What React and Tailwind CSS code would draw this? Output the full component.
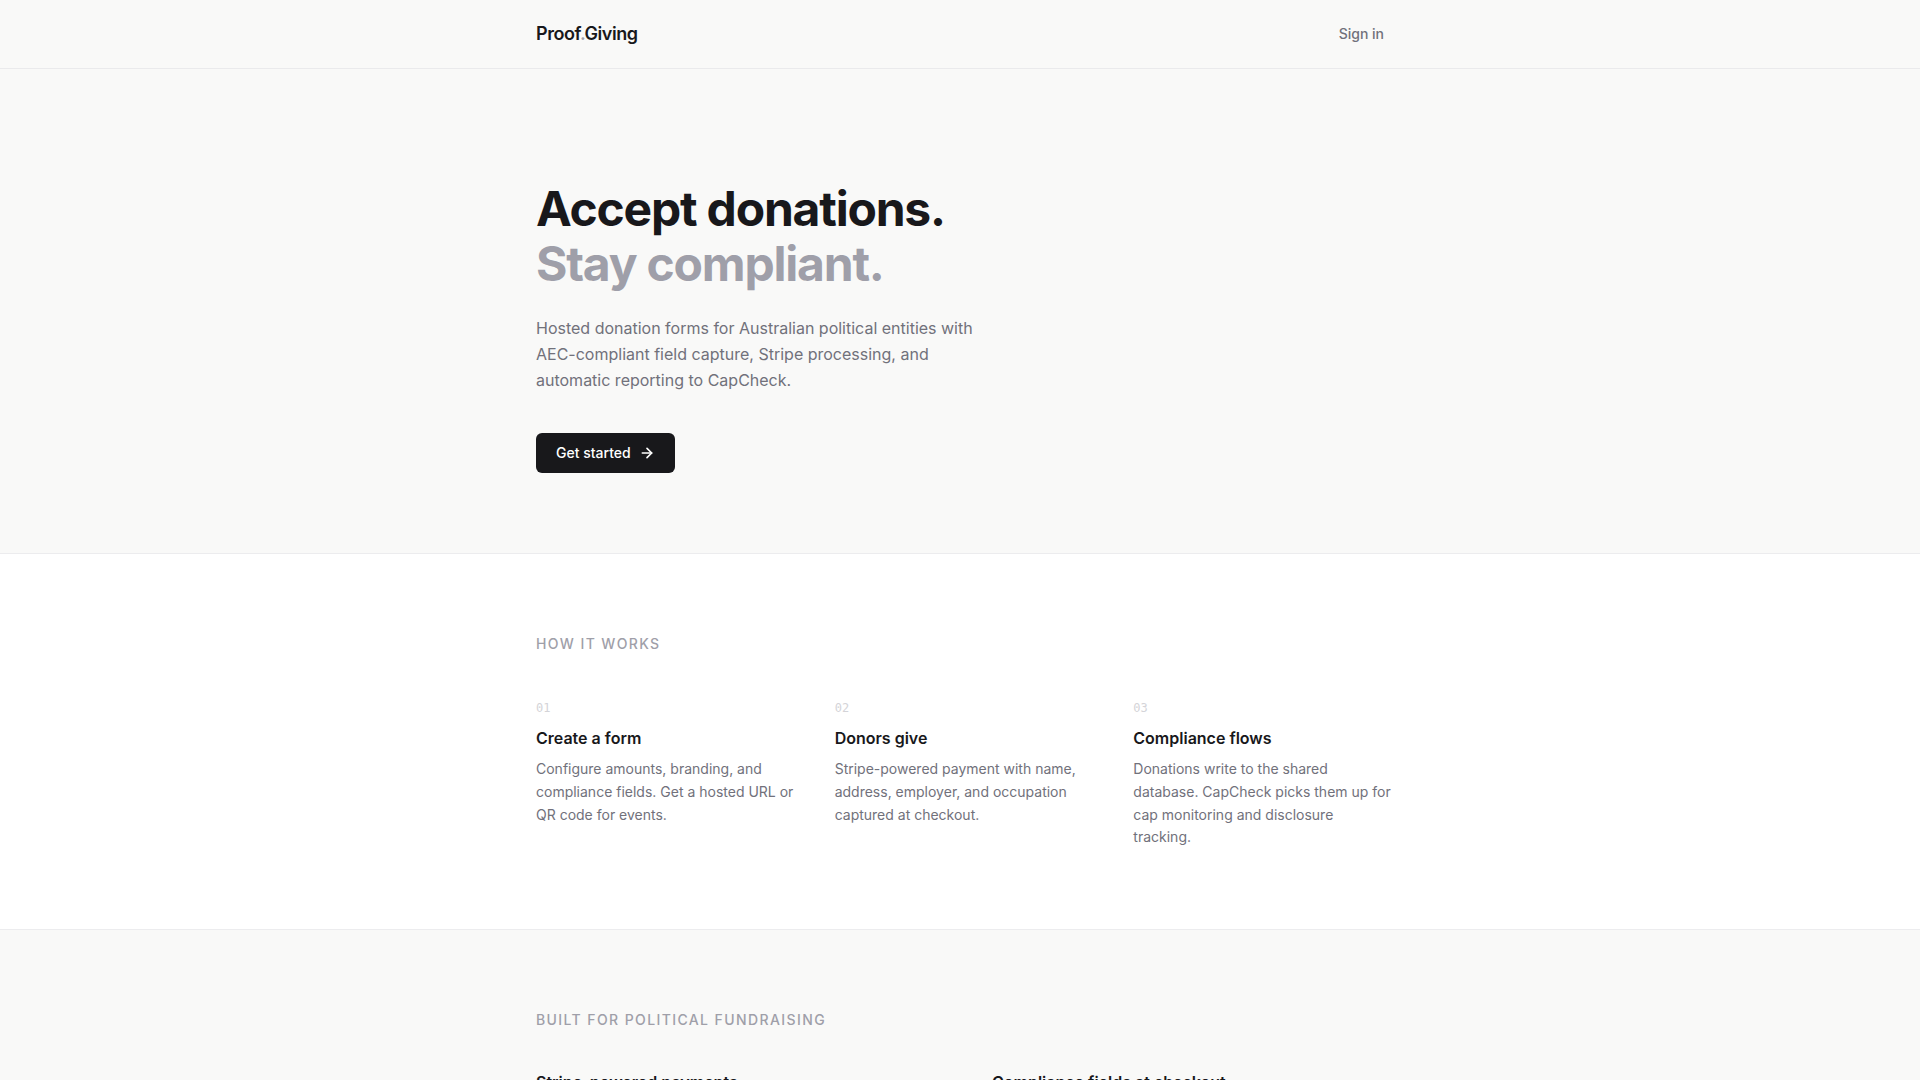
import { ArrowRight } from "lucide-react";

const steps = [
  {
    number: "01",
    title: "Create a form",
    body: "Configure amounts, branding, and\ncompliance fields. Get a hosted URL or\nQR code for events.",
  },
  {
    number: "02",
    title: "Donors give",
    body: "Stripe-powered payment with name,\naddress, employer, and occupation\ncaptured at checkout.",
  },
  {
    number: "03",
    title: "Compliance flows",
    body: "Donations write to the shared\ndatabase. CapCheck picks them up for\ncap monitoring and disclosure\ntracking.",
  },
];

const features = ["Stripe-powered payments", "Compliance fields at checkout"];

function Container({ className = "", children }) {
  return <div className={`mx-auto w-full max-w-4xl px-6 ${className}`}>{children}</div>;
}

function SectionLabel({ children }) {
  return (
    <h2 className="mb-10 text-sm font-medium tracking-widest text-zinc-400 uppercase">{children}</h2>
  );
}

export default function App() {
  return (
    <div className="h-screen overflow-hidden bg-[#f9f9f8] font-['Inter',sans-serif] text-zinc-900 antialiased">
      <header className="border-b border-zinc-200/70">
        <Container className="flex items-center justify-between py-5">
          <a href="#" className="text-lg font-semibold tracking-tight">
            Proof<span className="text-zinc-400">.</span>Giving
          </a>
          <a href="#signin" className="text-sm font-medium text-zinc-500">
            Sign in
          </a>
        </Container>
      </header>

      <main>
        <section>
          <Container className="pt-28 pb-20">
            <h1 className="text-5xl leading-[55px] font-bold tracking-tight">
              Accept donations.
              <br />
              <span className="text-zinc-400">Stay compliant.</span>
            </h1>
            <p className="mt-6 max-w-md text-base leading-relaxed text-zinc-500">
              Hosted donation forms for Australian political entities with AEC-compliant field
              capture, Stripe processing, and automatic reporting to CapCheck.
            </p>
            <button
              type="button"
              className="mt-10 flex h-10 items-center gap-2 rounded-md bg-zinc-900 px-5 text-sm font-medium text-white"
            >
              Get started
              <ArrowRight className="size-4" strokeWidth={2.5} aria-hidden="true" />
            </button>
          </Container>
        </section>

        <section className="border-y border-zinc-200/70 bg-white">
          <Container className="py-20">
            <SectionLabel>How it works</SectionLabel>
            <div className="grid grid-cols-3 gap-12">
              {steps.map((step) => (
                <div key={step.number}>
                  <div className="text-base">
                    <span className="font-['DejaVu_Sans_Mono',monospace] text-xs text-zinc-300">
                      {step.number}
                    </span>
                  </div>
                  <h3 className="mt-2 text-base font-semibold">{step.title}</h3>
                  <p className="-mr-6 mt-2 text-sm leading-relaxed whitespace-pre-line text-zinc-500">
                    {step.body}
                  </p>
                </div>
              ))}
            </div>
          </Container>
        </section>

        <section>
          <Container className="py-20">
            <SectionLabel>Built for political fundraising</SectionLabel>
            <div className="grid grid-cols-2 gap-16">
              {features.map((title) => (
                <h3 key={title} className="text-base font-semibold">
                  {title}
                </h3>
              ))}
            </div>
          </Container>
        </section>
      </main>
    </div>
  );
}
